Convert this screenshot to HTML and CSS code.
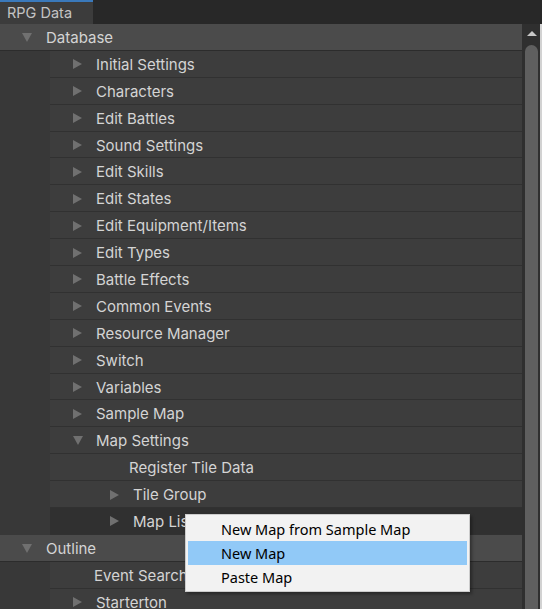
FILE: index.html
```html
<!DOCTYPE html>
<html lang="en">
<head>
    <meta charset="UTF-8">
    <title>RPG Data</title>
    <link rel="stylesheet" href="styles.css">
</head>
<body>
    <div class="window">
        <div class="tab-bar">
            <div class="tab">RPG Data</div>
        </div>
        <div class="panel">
            <div class="tree">
                <div class="row group"><span class="arrow down"></span>Database</div>
                <div class="children">
                    <div class="row"><span class="arrow"></span>Initial Settings</div>
                    <div class="row"><span class="arrow"></span>Characters</div>
                    <div class="row"><span class="arrow"></span>Edit Battles</div>
                    <div class="row"><span class="arrow"></span>Sound Settings</div>
                    <div class="row"><span class="arrow"></span>Edit Skills</div>
                    <div class="row"><span class="arrow"></span>Edit States</div>
                    <div class="row"><span class="arrow"></span>Edit Equipment/Items</div>
                    <div class="row"><span class="arrow"></span>Edit Types</div>
                    <div class="row"><span class="arrow"></span>Battle Effects</div>
                    <div class="row"><span class="arrow"></span>Common Events</div>
                    <div class="row"><span class="arrow"></span>Resource Manager</div>
                    <div class="row"><span class="arrow"></span>Switch</div>
                    <div class="row"><span class="arrow"></span>Variables</div>
                    <div class="row"><span class="arrow"></span>Sample Map</div>
                    <div class="row"><span class="arrow down"></span>Map Settings</div>
                    <div class="row leaf-deep">Register Tile Data</div>
                    <div class="row deep"><span class="arrow"></span>Tile Group</div>
                    <div class="row deep selected"><span class="arrow"></span>Map List</div>
                </div>
                <div class="row group"><span class="arrow down"></span>Outline</div>
                <div class="children">
                    <div class="row leaf">Event Search</div>
                    <div class="row"><span class="arrow"></span>Starterton</div>
                </div>
            </div>
            <div class="scrollbar">
                <div class="scroll-up"></div>
                <div class="scroll-thumb"></div>
            </div>
            <div class="edge"></div>
        </div>

        <div class="context-menu">
            <div class="menu-item">New Map from Sample Map</div>
            <div class="menu-item active">New Map</div>
            <div class="menu-item">Paste Map</div>
        </div>
    </div>
</body>
</html>
```

FILE: styles.css
```css
body {
    margin: 0;
    background-color: #383838;
    font-family: Inter, "Noto Sans", sans-serif;
    overflow: hidden;
}

.window {
    position: relative;
    width: 542px;
    height: 609px;
    display: flex;
    flex-direction: column;
    overflow: hidden;
}

.tab-bar {
    height: 24px;
    background: #282828;
    display: flex;
    flex-shrink: 0;
}

.tab {
    width: 86px;
    padding-left: 7px;
    background: #3c3c3c;
    border-top: 2px solid #3a79bb;
    color: #c4c4c4;
    font-size: 14.5px;
    line-height: 22px;
}

.panel {
    flex: 1;
    display: flex;
    min-height: 0;
}

.tree {
    width: 522px;
    background: #383838;
}

.row {
    box-sizing: border-box;
    height: 26.9px;
    padding-top: 1px;
    border-bottom: 1px solid #313131;
    display: flex;
    align-items: center;
    padding-left: 23px;
    color: #d4d4d4;
    font-size: 15px;
    background: #3d3d3d;
    white-space: nowrap;
}

.row.group {
    padding-left: 22px;
    background: #4b4b4b;
    border-bottom-color: #2c2c2c;
}

.children {
    margin-left: 50px;
}

.row.deep {
    padding-left: 60px;
}

.row.leaf-deep {
    padding-left: 79px;
}

.row.leaf {
    padding-left: 44px;
}

.row.selected {
    background: #303030;
}

.arrow {
    width: 0;
    height: 0;
    border-top: 5px solid transparent;
    border-bottom: 5px solid transparent;
    border-left: 9px solid #707070;
    margin-right: 14px;
}

.arrow.down {
    border-left: 5px solid transparent;
    border-right: 5px solid transparent;
    border-top: 9px solid #707070;
    border-bottom: 0;
    margin-right: 13px;
}

.row.group .arrow.down {
    margin-right: 14px;
}

.scrollbar {
    width: 18px;
    background: #2f2f2f;
    display: flex;
    flex-direction: column;
    align-items: center;
}

.scroll-up {
    margin-top: 7px;
    margin-left: 1px;
    width: 0;
    height: 0;
    border-left: 5px solid transparent;
    border-right: 5px solid transparent;
    border-bottom: 5px solid #c8c8c8;
}

.scroll-thumb {
    margin-top: 9px;
    width: 13px;
    flex: 1;
    background: #5f5f5f;
    border-radius: 7px 7px 0 0;
}

.edge {
    width: 2px;
    background: #d2d2d2;
}

.context-menu {
    position: absolute;
    left: 185px;
    top: 514px;
    width: 279px;
    padding: 2px 2px;
    background: #f2f2f2;
    border: 1px solid #cccccc;
    box-shadow: 2px 2px 3px rgba(0, 0, 0, 0.35);
    font-family: "Noto Sans", sans-serif;
    font-size: 14.5px;
    color: #000;
}

.menu-item {
    height: 24px;
    line-height: 24px;
    padding-left: 33px;
}

.menu-item.active {
    background: #91c9f7;
}
```
